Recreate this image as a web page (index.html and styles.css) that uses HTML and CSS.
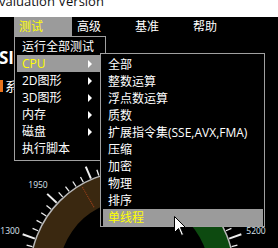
FILE: index.html
```html
<!DOCTYPE html>
<html lang="zh-CN">
  <head>
    <meta charset="UTF-8" />
    <meta name="viewport" content="width=device-width, initial-scale=1.0" />
    <title>测试菜单</title>
    <link rel="stylesheet" href="styles.css">
  </head>
  <body>
    <div class="titlebar">
      <span class="title-text">valuation Version</span>
    </div>

    <div class="menubar">
      <div class="menu-item active">
        测试
        <div class="dropdown">
          <div class="row">运行全部测试</div>
          <div class="row active">CPU<span class="arrow"></span></div>
          <div class="row">2D图形<span class="arrow"></span></div>
          <div class="row">3D图形<span class="arrow"></span></div>
          <div class="row">内存<span class="arrow"></span></div>
          <div class="row">磁盘<span class="arrow"></span></div>
          <div class="row">执行脚本</div>

          <div class="submenu">
            <div class="row">全部</div>
            <div class="row">整数运算</div>
            <div class="row">浮点数运算</div>
            <div class="row">质数</div>
            <div class="row">扩展指令集(SSE,AVX,FMA)</div>
            <div class="row">压缩</div>
            <div class="row">加密</div>
            <div class="row">物理</div>
            <div class="row">排序</div>
            <div class="row active">单线程</div>
          </div>
        </div>
      </div>
      <div class="menu-item">高级</div>
      <div class="menu-item">基准</div>
      <div class="menu-item">帮助</div>
    </div>

    <div class="content">
      <svg class="gauge" width="278" height="212" viewBox="0 36 278 212">
        <!-- 背景里的标题文字 -->
        <text class="big-title" x="-1" y="64">SI</text>
        <rect x="0" y="80" width="3" height="12" fill="#e8731c" />
        <text class="sub-title" x="5" y="91">系</text>

        <!-- 表盘 -->
        <path d="M36.15,307.9 A102,102 0 0 1 132,171 L132,200 A73,73 0 0 0 63.4,297.97 Z" fill="#3a2810" />
        <path d="M132,171 A102,102 0 0 1 227.85,307.9 L204.6,297.97 A73,73 0 0 0 132,200 Z" fill="#0d4a10" />
        <circle cx="132" cy="273" r="102" fill="none" stroke="#b8b8b8" stroke-width="1.5" />
        <line x1="132" y1="197" x2="132" y2="173" stroke="#b0441c" stroke-dasharray="1 1" transform="rotate(-30 132 273)" />

        <g class="ticks">
          <line x1="132" y1="170" x2="132" y2="164" transform="rotate(-75.2 132 273)" />
          <line class="major" x1="132" y1="170" x2="132" y2="157" transform="rotate(-70.5 132 273)" />
          <line x1="132" y1="170" x2="132" y2="164" transform="rotate(-65.8 132 273)" />
          <line x1="132" y1="170" x2="132" y2="164" transform="rotate(-61.1 132 273)" />
          <line x1="132" y1="170" x2="132" y2="164" transform="rotate(-56.4 132 273)" />
          <line x1="132" y1="170" x2="132" y2="164" transform="rotate(-51.7 132 273)" />
          <line class="major" x1="132" y1="170" x2="132" y2="157" transform="rotate(-47 132 273)" />
          <line x1="132" y1="170" x2="132" y2="164" transform="rotate(-42.3 132 273)" />
          <line x1="132" y1="170" x2="132" y2="164" transform="rotate(-37.6 132 273)" />
          <line x1="132" y1="170" x2="132" y2="164" transform="rotate(-32.9 132 273)" />
          <line x1="132" y1="170" x2="132" y2="164" transform="rotate(-28.2 132 273)" />
          <line class="major" x1="132" y1="170" x2="132" y2="157" transform="rotate(-23.5 132 273)" />
          <line x1="132" y1="170" x2="132" y2="164" transform="rotate(-18.8 132 273)" />
          <line x1="132" y1="170" x2="132" y2="164" transform="rotate(61.1 132 273)" />
          <line x1="132" y1="170" x2="132" y2="164" transform="rotate(65.8 132 273)" />
          <line class="major" x1="132" y1="170" x2="132" y2="157" transform="rotate(70.5 132 273)" />
          <line x1="132" y1="170" x2="132" y2="164" transform="rotate(75.2 132 273)" />
        </g>

        <text class="scale" x="38" y="188">1950</text>
        <text class="scale" x="10" y="234">1300</text>
        <text class="scale" x="256" y="234">5200</text>
      </svg>
    </div>

    <svg class="cursor" width="13" height="21" viewBox="0 0 13 21">
      <path d="M0.5,0.5 L0.5,16.5 L4.5,12.5 L7.5,19.5 L9.5,18.5 L6.5,11.5 L11.5,11.5 Z" fill="#fff" stroke="#000" stroke-width="1" />
    </svg>
  </body>
</html>
```

FILE: styles.css
```css
body {
  margin: 0;
  width: 278px;
  height: 248px;
  overflow: hidden;
  position: relative;
  background-color: #000;
  font-family: "Open Sans", "Noto Sans CJK SC", sans-serif;
  font-size: 12px;
  color: #fff;
}

.titlebar {
  height: 17px;
  background-color: #fff;
  overflow: hidden;
}
.title-text {
  display: block;
  margin-top: -5px;
  margin-left: -1px;
  font-size: 13px;
  line-height: 13px;
  color: #111;
  white-space: nowrap;
}

.menubar {
  display: flex;
  height: 19px;
  padding-left: 14px;
  background-color: #000;
  position: relative;
  z-index: 2;
}
.menu-item {
  position: relative;
  width: 58px;
  box-sizing: border-box;
  padding-left: 5px;
  line-height: 19px;
  color: #fff;
}
.menu-item.active {
  background-color: #9b9b9b;
  color: #ff0;
}

.dropdown {
  position: absolute;
  left: 0;
  top: 19px;
  width: 92px;
  box-sizing: border-box;
  padding: 1px 2px 3px 2px;
  border: 1px solid #a0a0a0;
  background-color: #000;
  color: #fff;
}
.row {
  position: relative;
  height: 17px;
  line-height: 17px;
  padding-left: 5px;
  white-space: nowrap;
}
.row.active {
  background-color: #9b9b9b;
  color: #ff0;
}
.arrow {
  position: absolute;
  right: 11px;
  top: 5px;
  width: 0;
  height: 0;
  border-top: 4px solid transparent;
  border-bottom: 4px solid transparent;
  border-left: 4px solid #fff;
}

.submenu {
  position: absolute;
  left: 85px;
  top: 16px;
  width: 165px;
  box-sizing: border-box;
  padding: 2px 1px 0 2px;
  border: 1px solid #a0a0a0;
  background-color: #000;
  color: #fff;
}

.content {
  height: 212px;
}
.gauge {
  display: block;
}
.big-title {
  font-family: "Open Sans", sans-serif;
  font-size: 17px;
  font-weight: bold;
  fill: #fff;
}
.sub-title {
  font-family: "Noto Sans CJK SC", sans-serif;
  font-size: 13px;
  fill: #fff;
}
.ticks line {
  stroke: #eee;
  stroke-width: 1.3;
}
.ticks line.major {
  stroke-width: 2;
}
.scale {
  font-family: "Open Sans", sans-serif;
  font-size: 8.5px;
  fill: #dde6f0;
  text-anchor: middle;
}

.cursor {
  position: absolute;
  left: 174px;
  top: 216px;
  z-index: 5;
}
```
